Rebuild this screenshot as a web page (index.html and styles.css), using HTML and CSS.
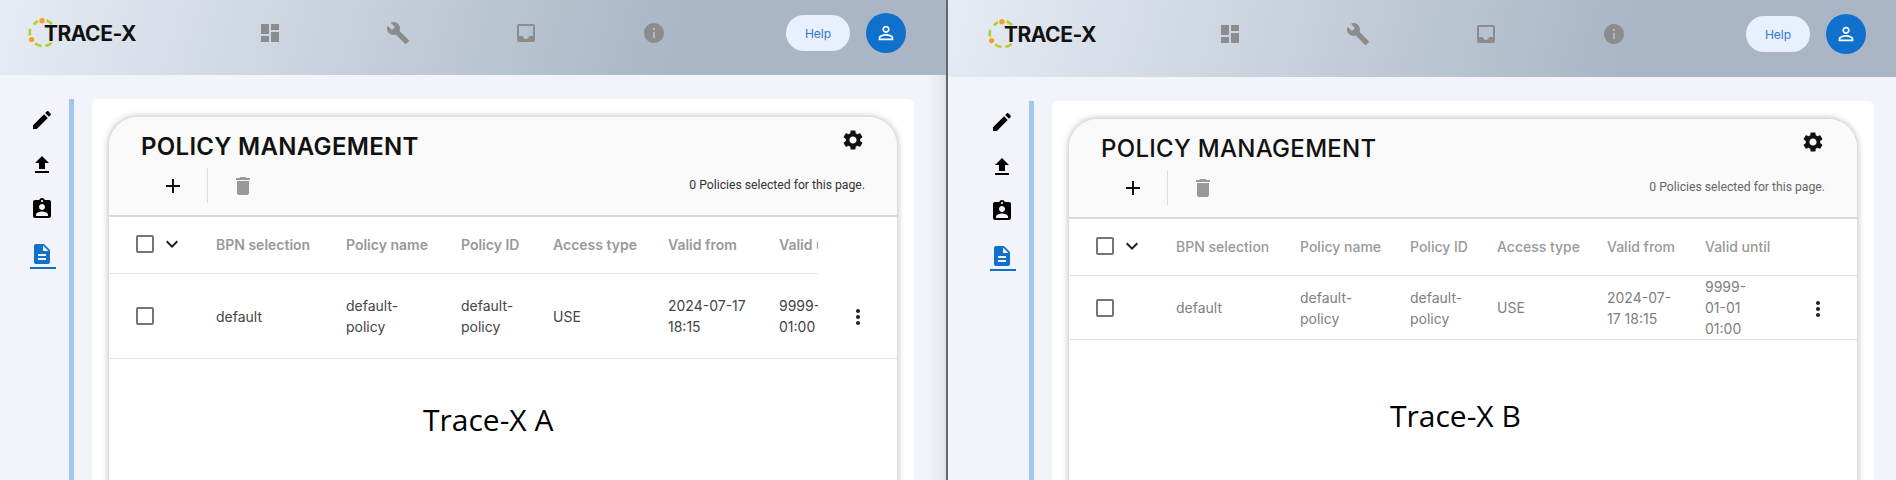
FILE: index.html
```html
<!DOCTYPE html>
<html>
<head>
    <meta charset="UTF-8">
    <title>Trace-X policy management</title>
    <link rel="stylesheet" href="styles.css">
</head>
<body>
    <!-- icon sprite, material shapes -->
    <svg class="sprite" xmlns="http://www.w3.org/2000/svg">
        <symbol id="i-dashboard" viewBox="0 0 24 24"><path d="M3 13h8V3H3v10zm0 8h8v-6H3v6zm10 0h8V11h-8v10zm0-18v6h8V3h-8z"/></symbol>
        <symbol id="i-build" viewBox="0 0 24 24"><path d="M22.7 19l-9.1-9.1c.9-2.3.4-5-1.5-6.9-2-2-5-2.4-7.4-1.3L9 6 6 9 1.6 4.7C.4 7.1.9 10.1 2.9 12.1c1.9 1.9 4.6 2.4 6.9 1.5l9.1 9.1c.4.4 1 .4 1.4 0l2.3-2.3c.5-.4.5-1.1.1-1.4z"/></symbol>
        <symbol id="i-inbox" viewBox="0 0 24 24"><path d="M19 3H4.99c-1.11 0-1.98.89-1.98 2L3 19c0 1.1.88 2 1.99 2H19c1.1 0 2-.9 2-2V5c0-1.11-.9-2-2-2zm0 12h-4c0 1.66-1.35 3-3 3s-3-1.34-3-3H4.99V5H19v10z"/></symbol>
        <symbol id="i-info" viewBox="0 0 24 24"><path d="M12 2C6.48 2 2 6.48 2 12s4.48 10 10 10 10-4.48 10-10S17.52 2 12 2zm1 15h-2v-6h2v6zm0-8h-2V7h2v2z"/></symbol>
        <symbol id="i-person" viewBox="0 0 24 24"><path d="M12 5.9c1.16 0 2.1.94 2.1 2.1s-.94 2.1-2.1 2.1S9.9 9.16 9.9 8s.94-2.1 2.1-2.1m0 9c2.97 0 6.1 1.46 6.1 2.1v1.1H5.9V17c0-.64 3.13-2.1 6.1-2.1M12 4C9.79 4 8 5.79 8 8s1.79 4 4 4 4-1.79 4-4-1.79-4-4-4zm0 9c-2.67 0-8 1.34-8 4v3h16v-3c0-2.66-5.33-4-8-4z"/></symbol>
        <symbol id="i-edit" viewBox="0 0 24 24"><path d="M3 17.25V21h3.75L17.81 9.94l-3.75-3.75L3 17.25zM20.71 7.04c.39-.39.39-1.02 0-1.41l-2.34-2.34c-.39-.39-1.02-.39-1.41 0l-1.83 1.83 3.75 3.75 1.83-1.83z"/></symbol>
        <symbol id="i-upload" viewBox="0 0 24 24"><path d="M9 16h6v-6h4l-7-7-7 7h4zm-4 2h14v2H5z"/></symbol>
        <symbol id="i-assign" viewBox="0 0 24 24"><path d="M19 3h-4.18C14.4 1.84 13.3 1 12 1c-1.3 0-2.4.84-2.82 2H5c-1.1 0-2 .9-2 2v14c0 1.1.9 2 2 2h14c1.1 0 2-.9 2-2V5c0-1.1-.9-2-2-2zm-7 0c.55 0 1 .45 1 1s-.45 1-1 1-1-.45-1-1 .45-1 1-1zm0 4c1.66 0 3 1.34 3 3s-1.34 3-3 3-3-1.34-3-3 1.34-3 3-3zm6 12H6v-1.4c0-2 4-3.1 6-3.1s6 1.1 6 3.1V19z"/></symbol>
        <symbol id="i-doc" viewBox="0 0 24 24"><path d="M14 2H6c-1.1 0-1.99.9-1.99 2L4 20c0 1.1.89 2 1.99 2H18c1.1 0 2-.9 2-2V8l-6-6zm2 16H8v-2h8v2zm0-4H8v-2h8v2zm-3-5V3.5L18.5 9H13z"/></symbol>
        <symbol id="i-gear" viewBox="0 0 24 24"><path d="M19.14 12.94c.04-.3.06-.61.06-.94 0-.32-.02-.64-.07-.94l2.03-1.58c.18-.14.23-.41.12-.61l-1.92-3.32c-.12-.22-.37-.29-.59-.22l-2.39.96c-.5-.38-1.03-.7-1.62-.94l-.36-2.54c-.04-.24-.24-.41-.48-.41h-3.84c-.24 0-.43.17-.47.41l-.36 2.54c-.59.24-1.13.57-1.62.94l-2.39-.96c-.22-.08-.47 0-.59.22L2.74 8.87c-.12.21-.08.47.12.61l2.03 1.58c-.05.3-.09.63-.09.94s.02.64.07.94l-2.03 1.58c-.18.14-.23.41-.12.61l1.92 3.32c.12.22.37.29.59.22l2.39-.96c.5.38 1.03.7 1.62.94l.36 2.54c.05.24.24.41.48.41h3.84c.24 0 .44-.17.47-.41l.36-2.54c.59-.24 1.13-.56 1.62-.94l2.39.96c.22.08.47 0 .59-.22l1.92-3.32c.12-.22.07-.47-.12-.61l-2.01-1.58zM12 15.6c-1.98 0-3.6-1.62-3.6-3.6s1.62-3.6 3.6-3.6 3.6 1.62 3.6 3.6-1.62 3.6-3.6 3.6z"/></symbol>
        <symbol id="i-plus" viewBox="0 0 24 24"><path d="M19 13h-6v6h-2v-6H5v-2h6V5h2v6h6v2z"/></symbol>
        <symbol id="i-trash" viewBox="0 0 24 24"><path d="M6 19c0 1.1.9 2 2 2h8c1.1 0 2-.9 2-2V7H6v12zM19 4h-3.5l-1-1h-5l-1 1H5v2h14V4z"/></symbol>
        <symbol id="i-check" viewBox="0 0 24 24"><path d="M19 5v14H5V5h14m0-2H5c-1.1 0-2 .9-2 2v14c0 1.1.9 2 2 2h14c1.1 0 2-.9 2-2V5c0-1.1-.9-2-2-2z"/></symbol>
        <symbol id="i-chevron" viewBox="0 0 24 24"><path d="M7.41 8.59L12 13.17l4.59-4.58L18 10l-6 6-6-6 1.41-1.41z"/></symbol>
        <symbol id="i-more" viewBox="0 0 24 24"><path d="M12 8c1.1 0 2-.9 2-2s-.9-2-2-2-2 .9-2 2 .9 2 2 2zm0 2c-1.1 0-2 .9-2 2s.9 2 2 2 2-.9 2-2-.9-2-2-2zm0 6c-1.1 0-2 .9-2 2s.9 2 2 2 2-.9 2-2-.9-2-2-2z"/></symbol>
        <symbol id="i-logo" viewBox="0 0 30 30">
            <g fill="none" stroke="#b5cc2e" stroke-width="2.6">
                <path d="M6 6.5A13 13 0 0 1 10 3.2"/>
                <path d="M18.5 2.6A13 13 0 0 1 24 6"/>
                <path d="M2.3 11A13 13 0 0 0 2 17.5"/>
                <path d="M7 25.5A13 13 0 0 0 13.5 28"/>
                <path d="M17.5 28A13 13 0 0 0 23.5 25"/>
            </g>
            <circle cx="14" cy="2.7" r="2.7" fill="#f9a01b"/>
            <circle cx="3.6" cy="21.6" r="2.7" fill="#f9a01b"/>
        </symbol>
    </svg>

    <div class="page">
        <!-- left capture -->
        <section class="pane pane-a">
            <header class="topbar">
                <div class="logo"><svg class="logo-mark"><use href="#i-logo"/></svg><span class="logo-text">TRACE-X</span></div>
                <nav class="main-nav">
                    <a class="nav-item"><svg class="icon"><use href="#i-dashboard"/></svg></a>
                    <a class="nav-item"><svg class="icon"><use href="#i-build"/></svg></a>
                    <a class="nav-item"><svg class="icon"><use href="#i-inbox"/></svg></a>
                    <a class="nav-item"><svg class="icon"><use href="#i-info"/></svg></a>
                </nav>
                <button class="help-btn" type="button">Help</button>
                <div class="avatar"><svg class="avatar-icon"><use href="#i-person"/></svg></div>
            </header>
            <div class="content">
                <aside class="side-nav">
                    <a class="side-item"><svg class="icon"><use href="#i-edit"/></svg></a>
                    <a class="side-item"><svg class="icon"><use href="#i-upload"/></svg></a>
                    <a class="side-item"><svg class="icon"><use href="#i-assign"/></svg></a>
                    <a class="side-item side-active"><svg class="icon"><use href="#i-doc"/></svg></a>
                </aside>
                <main class="sheet">
                    <div class="policy-card">
                        <div class="card-head">
                            <div class="title-row">
                                <h1 class="title">POLICY MANAGEMENT</h1>
                                <svg class="icon gear"><use href="#i-gear"/></svg>
                            </div>
                            <div class="tool-row">
                                <svg class="icon plus"><use href="#i-plus"/></svg>
                                <span class="tool-sep"></span>
                                <svg class="icon trash"><use href="#i-trash"/></svg>
                                <span class="count">0 Policies selected for this page.</span>
                            </div>
                        </div>
                        <table class="policy-table">
                            <colgroup>
                                <col class="col-check"><col class="col-bpn"><col class="col-name"><col class="col-id">
                                <col class="col-access"><col class="col-from"><col class="col-until"><col class="col-menu">
                            </colgroup>
                            <thead>
                                <tr>
                                    <th><div class="check-cell"><svg class="icon box"><use href="#i-check"/></svg><svg class="icon chevron"><use href="#i-chevron"/></svg></div></th>
                                    <th>BPN selection</th>
                                    <th>Policy name</th>
                                    <th>Policy ID</th>
                                    <th>Access type</th>
                                    <th>Valid from</th>
                                    <th>Valid until</th>
                                    <th class="no-line"></th>
                                </tr>
                            </thead>
                            <tbody>
                                <tr>
                                    <td><div class="check-cell"><svg class="icon box"><use href="#i-check"/></svg></div></td>
                                    <td>default</td>
                                    <td>default-<br>policy</td>
                                    <td>default-<br>policy</td>
                                    <td>USE</td>
                                    <td>2024-07-17<br>18:15</td>
                                    <td>9999-01-01<br>01:00</td>
                                    <td class="menu-cell"><svg class="icon more"><use href="#i-more"/></svg></td>
                                </tr>
                            </tbody>
                        </table>
                        <p class="caption">Trace-X A</p>
                    </div>
                </main>
            </div>
        </section>

        <!-- right capture -->
        <section class="pane pane-b">
            <header class="topbar">
                <div class="logo"><svg class="logo-mark"><use href="#i-logo"/></svg><span class="logo-text">TRACE-X</span></div>
                <nav class="main-nav">
                    <a class="nav-item"><svg class="icon"><use href="#i-dashboard"/></svg></a>
                    <a class="nav-item"><svg class="icon"><use href="#i-build"/></svg></a>
                    <a class="nav-item"><svg class="icon"><use href="#i-inbox"/></svg></a>
                    <a class="nav-item"><svg class="icon"><use href="#i-info"/></svg></a>
                </nav>
                <button class="help-btn" type="button">Help</button>
                <div class="avatar"><svg class="avatar-icon"><use href="#i-person"/></svg></div>
            </header>
            <div class="content">
                <aside class="side-nav">
                    <a class="side-item"><svg class="icon"><use href="#i-edit"/></svg></a>
                    <a class="side-item"><svg class="icon"><use href="#i-upload"/></svg></a>
                    <a class="side-item"><svg class="icon"><use href="#i-assign"/></svg></a>
                    <a class="side-item side-active"><svg class="icon"><use href="#i-doc"/></svg></a>
                </aside>
                <main class="sheet">
                    <div class="policy-card">
                        <div class="card-head">
                            <div class="title-row">
                                <h1 class="title">POLICY MANAGEMENT</h1>
                                <svg class="icon gear"><use href="#i-gear"/></svg>
                            </div>
                            <div class="tool-row">
                                <svg class="icon plus"><use href="#i-plus"/></svg>
                                <span class="tool-sep"></span>
                                <svg class="icon trash"><use href="#i-trash"/></svg>
                                <span class="count">0 Policies selected for this page.</span>
                            </div>
                        </div>
                        <table class="policy-table">
                            <colgroup>
                                <col class="col-check"><col class="col-bpn"><col class="col-name"><col class="col-id">
                                <col class="col-access"><col class="col-from"><col class="col-until"><col class="col-menu">
                            </colgroup>
                            <thead>
                                <tr>
                                    <th><div class="check-cell"><svg class="icon box"><use href="#i-check"/></svg><svg class="icon chevron"><use href="#i-chevron"/></svg></div></th>
                                    <th>BPN selection</th>
                                    <th>Policy name</th>
                                    <th>Policy ID</th>
                                    <th>Access type</th>
                                    <th>Valid from</th>
                                    <th>Valid until</th>
                                    <th></th>
                                </tr>
                            </thead>
                            <tbody>
                                <tr>
                                    <td><div class="check-cell"><svg class="icon box"><use href="#i-check"/></svg></div></td>
                                    <td>default</td>
                                    <td>default-<br>policy</td>
                                    <td>default-<br>policy</td>
                                    <td>USE</td>
                                    <td>2024-07-<br>17 18:15</td>
                                    <td>9999-<br>01-01<br>01:00</td>
                                    <td class="menu-cell"><svg class="icon more"><use href="#i-more"/></svg></td>
                                </tr>
                            </tbody>
                        </table>
                        <p class="caption">Trace-X B</p>
                    </div>
                </main>
            </div>
        </section>
    </div>
</body>
</html>
```

FILE: styles.css
```css
* {
    box-sizing: border-box;
}
html, body {
    margin: 0;
    height: 480px;
    overflow: hidden;
}
body {
    font-family: Inter, "Liberation Sans", sans-serif;
    font-size: 14px;
    line-height: 21px;
    color: #444;
    background-color: #f2f3fb;
}
.sprite {
    display: none;
}
.icon {
    display: block;
    width: 24px;
    height: 24px;
    flex: none;
    fill: currentColor;
}

.page {
    display: flex;
    height: 480px;
}
.pane {
    display: flex;
    flex-direction: column;
    overflow: hidden;
    height: 480px;
}
.pane-a {
    width: 948px;
    flex: none;
    border-right: 2px solid #666;
}
.pane-b {
    flex: 1;
    min-width: 0;
}

/* top bar */
.topbar {
    display: flex;
    align-items: center;
    flex: none;
    height: 75px;
    padding: 0 40px 9px 28px;
    background: linear-gradient(105deg, #e6ecf5 0%, #aab6c5 72%, #aab6c5 100%);
}
.pane-b .topbar {
    height: 77px;
    padding: 0 30px 9px 40px;
}
.logo {
    display: flex;
    align-items: center;
    width: 178px;
    flex: none;
}
.logo-mark {
    width: 30px;
    height: 30px;
    flex: none;
}
.logo-text {
    margin-left: -14px;
    padding-top: 1px;
    font-size: 21px;
    font-weight: 700;
    letter-spacing: -.5px;
    color: #111;
}
.main-nav {
    display: flex;
}
.nav-item {
    display: flex;
    justify-content: center;
    width: 128px;
    color: #8c8c8c;
}
.help-btn {
    width: 64px;
    height: 36px;
    margin-left: auto;
    border: 0;
    border-radius: 18px;
    background-color: #e8f0fd;
    color: #2f7bd6;
    font-family: inherit;
    font-size: 12px;
}
.avatar {
    display: flex;
    align-items: center;
    justify-content: center;
    width: 40px;
    height: 40px;
    margin-left: 16px;
    border-radius: 50%;
    background-color: #0f71cb;
}
.avatar-icon {
    width: 22px;
    height: 22px;
    fill: #fff;
}

/* body of the app */
.content {
    display: flex;
    flex: 1;
    min-height: 0;
    padding-top: 24px;
}
.pane-a .content {
    box-shadow: inset -22px 0 20px -20px rgba(0, 0, 0, .12);
}
.pane-b .content {
    padding-left: 12px;
}
.side-nav {
    display: flex;
    flex-direction: column;
    gap: 8px;
    flex: none;
    width: 74px;
    padding-left: 30px;
    border-right: 5px solid #a1c6ec;
}
.side-item {
    display: flex;
    justify-content: center;
    width: 26px;
    height: 36.5px;
    padding: 9px 2px 0 0;
    color: #000;
}
.side-active {
    color: #0f71cb;
    border-bottom: 2px solid #0f71cb;
}
.sheet {
    flex: 1;
    margin: 0 32px 0 18px;
    padding: 17px 16px 0;
    border-radius: 6px 6px 0 0;
    background-color: #fff;
}
.pane-b .sheet {
    margin-right: 22px;
}
.policy-card {
    height: 500px;
    border: 1px solid #ddd;
    border-radius: 30px 30px 0 0;
    background-color: #fff;
    box-shadow: 0 0 6px rgba(0, 0, 0, .25);
    overflow: hidden;
}

/* card header */
.card-head {
    height: 100px;
    border-bottom: 2px solid #d9d9d9;
    background-color: #fafafa;
}
.title-row {
    display: flex;
    align-items: center;
    justify-content: space-between;
    height: 51px;
    padding: 0 32px;
}
.title {
    margin: 9px 0 0;
    font-size: 24px;
    line-height: 30px;
    font-weight: 600;
    letter-spacing: .3px;
    color: #111;
}
.pane-b .title {
    font-weight: 500;
}
.gear {
    margin-bottom: 5px;
    color: #111;
}
.tool-row {
    display: flex;
    align-items: center;
    height: 35px;
    padding: 0 32px 0 52px;
}
.plus {
    color: #111;
}
.tool-sep {
    width: 1px;
    height: 35px;
    margin: 0 23px 0 22px;
    background-color: #ddd;
}
.trash {
    color: #999;
}
.count {
    margin-left: auto;
    font-family: Roboto, sans-serif;
    font-size: 12.2px;
    color: #333;
}
.pane-b .count {
    color: #666;
}

/* table */
.policy-table {
    width: 100%;
    table-layout: fixed;
    border-collapse: separate;
    border-spacing: 0;
}
.policy-table th, .policy-table td {
    padding: 0;
    overflow: hidden;
    white-space: nowrap;
    text-align: left;
    border-bottom: 1px solid #e2e2e2;
}
.policy-table th {
    height: 57px;
    padding-bottom: 2px;
    font-weight: 600;
    color: #999;
}
.policy-table td {
    height: 85px;
}
.policy-table th.no-line {
    border-bottom: 0;
}
.pane-b .policy-table th {
    font-weight: 500;
}
.pane-b .policy-table td {
    height: 64px;
    color: #808080;
}
.check-cell {
    display: flex;
    align-items: center;
    gap: 3px;
    padding-left: 24px;
}
.box {
    color: #757575;
}
.chevron {
    color: #222;
}
.more {
    margin: 2px auto 0;
    color: #222;
}
.col-check { width: 107px; }
.col-menu { width: 79px; }
.pane-a .col-bpn { width: 130px; }
.pane-a .col-name { width: 115px; }
.pane-a .col-id { width: 92px; }
.pane-a .col-access { width: 115px; }
.pane-a .col-from { width: 111px; }
.pane-a .col-until { width: 39px; }
.pane-b .col-bpn { width: 124px; }
.pane-b .col-name { width: 110px; }
.pane-b .col-id { width: 87px; }
.pane-b .col-access { width: 110px; }
.pane-b .col-from { width: 98px; }
.pane-b .col-until { width: 73px; }

/* text laid over the capture */
.caption {
    margin: 0;
    padding: 41px 0 0 314px;
    font-family: "Open Sans", sans-serif;
    font-size: 30px;
    line-height: 40px;
    color: #000;
}
.pane-b .caption {
    padding: 56px 0 0 321px;
}
```
